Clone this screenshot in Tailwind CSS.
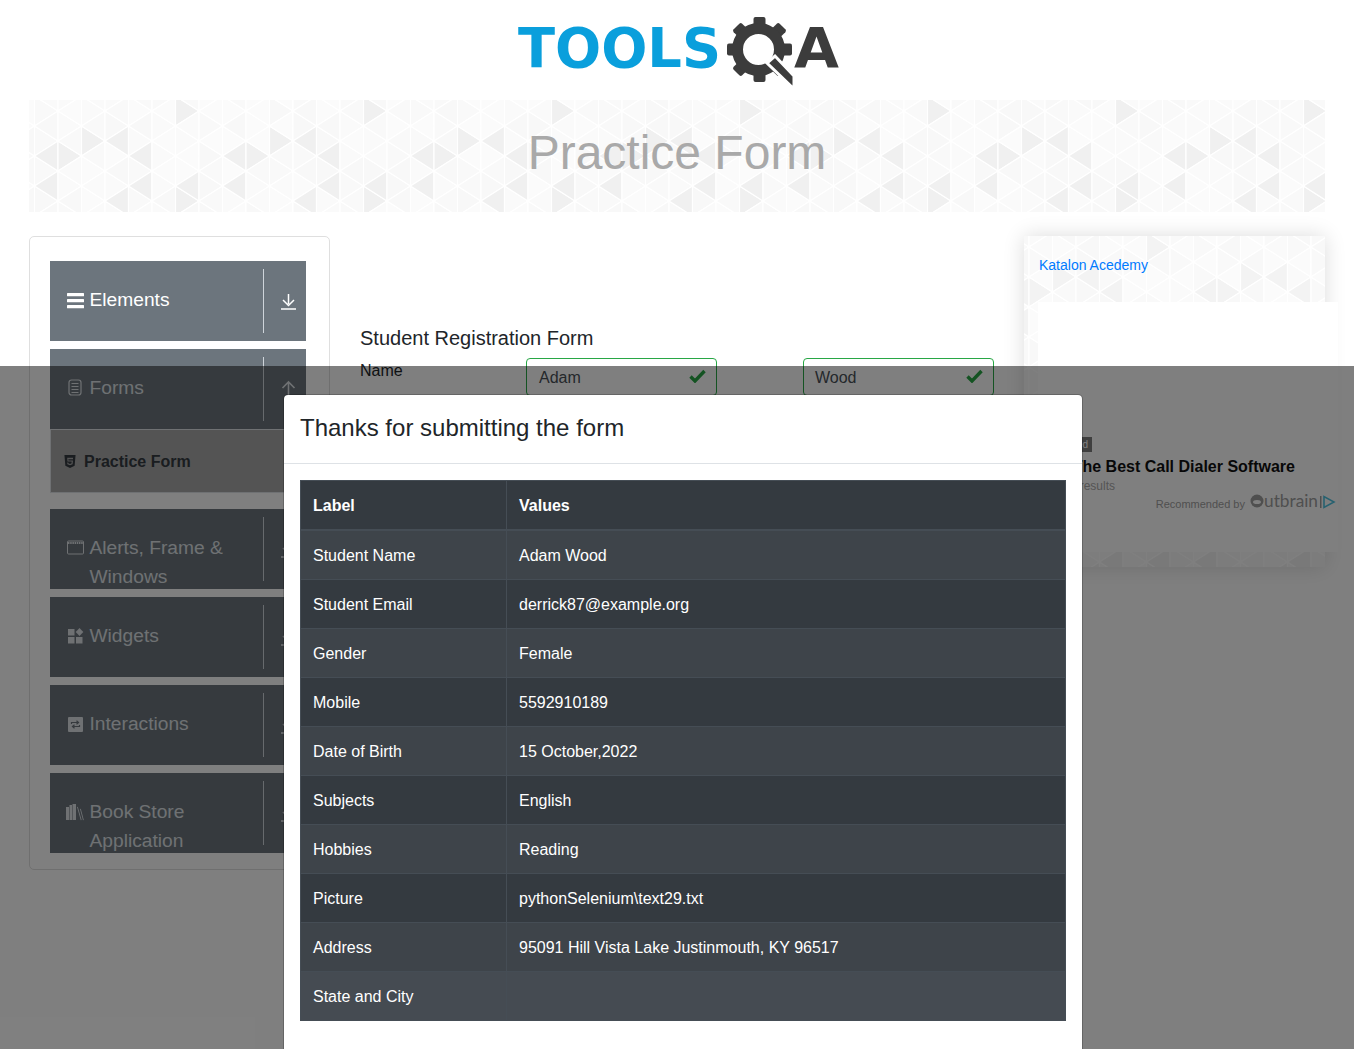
<!DOCTYPE html>
<html lang="en">
<head>
<meta charset="UTF-8">
<title>Practice Form</title>
<script src="https://cdn.jsdelivr.net/npm/@tailwindcss/browser@4"></script>
</head>
<body class="relative h-[1049px] overflow-hidden bg-white font-['Liberation_Sans',Arial,sans-serif] text-[#212529]">

<header class="flex h-[100px] w-[1354px] justify-center">
  <svg width="340" height="100" viewBox="507 0 340 100" aria-label="Tools QA">
    <text x="518" y="67" font-family="DejaVu Sans" font-weight="700" font-size="55" fill="#0a9fdc" textLength="203" lengthAdjust="spacingAndGlyphs">TOOLS</text>
    <g fill="#3c3c3c">
      <rect x="753.500" y="17" width="12" height="12" rx="2"/>
      <rect x="753.500" y="17" width="12" height="12" rx="2" transform="rotate(45 759.500 49.500)"/>
      <rect x="753.500" y="17" width="12" height="12" rx="2" transform="rotate(90 759.500 49.500)"/>
      <rect x="753.500" y="17" width="12" height="12" rx="2" transform="rotate(135 759.500 49.500)"/>
      <rect x="753.500" y="17" width="12" height="12" rx="2" transform="rotate(180 759.500 49.500)"/>
      <rect x="753.500" y="17" width="12" height="12" rx="2" transform="rotate(225 759.500 49.500)"/>
      <rect x="753.500" y="17" width="12" height="12" rx="2" transform="rotate(270 759.500 49.500)"/>
      <rect x="753.500" y="17" width="12" height="12" rx="2" transform="rotate(315 759.500 49.500)"/>
    </g>
    <circle cx="758.500" cy="49.500" r="21" fill="none" stroke="#3c3c3c" stroke-width="11"/>
    <path fill="#3c3c3c" stroke="#fff" stroke-width="3" d="M767 63l8-7 19 20v13z"/>
    <text x="794" y="67" font-family="DejaVu Sans" font-weight="700" font-size="55" fill="#3c3c3c" textLength="45" lengthAdjust="spacingAndGlyphs">A</text>
  </svg>
</header>

<div class="relative mx-[29px] flex h-[112px] w-[1296px] items-start justify-center overflow-hidden">
  <svg data-tri="0" class="absolute inset-0" width="1296" height="112"></svg>
  <h1 class="relative mt-6 text-[48px] leading-[58px] text-[#a9a9a9]">Practice Form</h1>
</div>

<main class="mt-6 flex items-start pl-[29px]">
  <aside class="h-[634px] w-[301px] shrink-0 rounded-[5px] border border-[#dfdfdf] bg-white pt-6 pl-5">
    <div class="flex w-[256px] flex-col">
      <div class="flex h-20 overflow-hidden bg-[#6c757d] text-[19.2px] leading-[29px] text-white">
        <div class="flex w-[213px] pl-[17px] pt-6">
          <svg class="mt-[7px] mr-[5px] h-[17px] w-[17px] shrink-0" viewBox="0 0 17 17" fill="#fff"><rect y="1" width="17" height="3.200" rx=".5"/><rect y="7" width="17" height="3.200" rx=".5"/><rect y="13" width="17" height="3.200" rx=".5"/></svg>
          <span class="pl-[0.5px]">Elements</span>
        </div>
        <div class="mt-2 h-16 w-px bg-[#ced4da]"></div>
        <svg class="mt-8 ml-[17px] h-[17px] w-[15px]" viewBox="0 0 15 17" fill="none" stroke="#fff" stroke-width="1.500"><path d="M7.500 1v10M2 7l5.500 5.500L13 7M0 16h15"/></svg>
      </div>
      <div class="mt-2 flex h-20 overflow-hidden bg-[#6c757d] text-[19.2px] leading-[29px] text-[#dee2e6]">
        <div class="flex w-[213px] pl-[17px] pt-6">
          <svg class="mt-[6px] mr-[6px] h-[17px] w-4 shrink-0" viewBox="0 0 16 17"><rect x="2" y="1" width="12" height="15" rx="2.500" fill="none" stroke="#dee2e6" stroke-width="1.200"/><path d="M4.500 4.500h7M4.500 7.500h7M4.500 10.500h7M4.500 13.500h7" stroke="#dee2e6"/></svg>
          <span class="pl-[0.5px]">Forms</span>
        </div>
        <div class="mt-2 h-16 w-px bg-[#ced4da]"></div>
        <svg class="mt-[30px] ml-[17px] h-[19px] w-[15px]" viewBox="0 0 15 19" fill="none" stroke="#dee2e6" stroke-width="1.600"><path d="M7.500 19V3M1.500 9l6-6 6 6"/></svg>
      </div>
      <div class="flex h-16 items-center border border-[#dee2e6] bg-[#a9a9a9] pl-[13px] pt-px text-base font-bold text-[#343a40]">
        <svg class="mr-2 h-[13px] w-[12px] shrink-0" viewBox="0 0 12 14" fill="#343a40"><path fill-rule="evenodd" d="M0 0h12l-1 11.500L6 14l-5-2.500zM3 3l.3 4h4.500l-.1 2-1.700.6L4.200 9l-.1-1H3l.2 2 2.800 1 2.800-1 .4-4H4.300l-.1-1.500h5L9.300 3z"/></svg>
        <span>Practice Form</span>
      </div>
      <div class="mt-4 flex h-20 overflow-hidden bg-[#6c757d] text-[19.2px] leading-[29px] text-[#dee2e6]">
        <div class="flex w-[213px] pl-[17px] pt-6">
          <svg class="mt-[7px] mr-[5px] h-[15px] w-[17px] shrink-0" viewBox="0 0 17 15" fill="none" stroke="#dee2e6"><rect x=".5" y="1" width="16" height="13" rx="1"/><path d="M1 3h15" stroke-width="2" stroke-dasharray="1.500 .7"/></svg>
          <span class="pl-[0.5px]">Alerts, Frame &amp; Windows</span>
        </div>
        <div class="mt-2 h-16 w-px bg-[#ced4da]"></div>
        <svg class="mt-8 ml-[17px] h-[17px] w-[15px]" viewBox="0 0 15 17" fill="none" stroke="#dee2e6" stroke-width="1.500"><path d="M7.500 1v10M2 7l5.500 5.500L13 7M0 16h15"/></svg>
      </div>
      <div class="mt-2 flex h-20 overflow-hidden bg-[#6c757d] text-[19.2px] leading-[29px] text-[#dee2e6]">
        <div class="flex w-[213px] pl-[17px] pt-6">
          <svg class="mt-[7px] mr-[5px] h-[16px] w-[17px] shrink-0" viewBox="0 0 17 16" fill="#dee2e6"><rect x="1" y="1" width="6.500" height="6.500"/><rect x="1" y="9" width="6.500" height="6.500"/><rect x="9" y="9" width="6.500" height="6.500"/><path d="M12.500 0l3.800 4-3.800 4-3.800-4z"/></svg>
          <span class="pl-[0.5px]">Widgets</span>
        </div>
        <div class="mt-2 h-16 w-px bg-[#ced4da]"></div>
        <svg class="mt-8 ml-[17px] h-[17px] w-[15px]" viewBox="0 0 15 17" fill="none" stroke="#dee2e6" stroke-width="1.500"><path d="M7.500 1v10M2 7l5.500 5.500L13 7M0 16h15"/></svg>
      </div>
      <div class="mt-2 flex h-20 overflow-hidden bg-[#6c757d] text-[19.2px] leading-[29px] text-[#dee2e6]">
        <div class="flex w-[213px] pl-[17px] pt-6">
          <svg class="mt-[7px] mr-[5px] h-[17px] w-[17px] shrink-0" viewBox="0 0 17 17"><rect x="1" y="1" width="15" height="15" rx="1" fill="#dee2e6"/><path d="M4.500 8V6.500h7M9.500 4.800l2 1.700-2 1.700M12.500 9v1.500h-7M7.500 12.200l-2-1.700 2-1.700" fill="none" stroke="#6c757d" stroke-width="1.200"/></svg>
          <span class="pl-[0.5px]">Interactions</span>
        </div>
        <div class="mt-2 h-16 w-px bg-[#ced4da]"></div>
        <svg class="mt-8 ml-[17px] h-[17px] w-[15px]" viewBox="0 0 15 17" fill="none" stroke="#dee2e6" stroke-width="1.500"><path d="M7.500 1v10M2 7l5.500 5.500L13 7M0 16h15"/></svg>
      </div>
      <div class="mt-2 flex h-20 overflow-hidden bg-[#6c757d] text-[19.2px] leading-[29px] text-[#dee2e6]">
        <div class="flex w-[213px] pl-[16px] pt-6">
          <svg class="mt-[7px] mr-[5px] h-[17px] w-[18px] shrink-0" viewBox="0 0 18 17" fill="#dee2e6"><rect x="0" y="3" width="3" height="13"/><rect x="3.500" y="1" width="2.500" height="15"/><rect x="6.500" y="0" width="3.500" height="16"/><path d="M11 3l.8-.3 3.800 13.300-.8.3zM14 5l.8-.3 3 11.300-.8.3z"/></svg>
          <span class="pl-[0.5px]">Book Store Application</span>
        </div>
        <div class="mt-2 h-16 w-px bg-[#ced4da]"></div>
        <svg class="mt-8 ml-[17px] h-[17px] w-[15px]" viewBox="0 0 15 17" fill="none" stroke="#dee2e6" stroke-width="1.500"><path d="M7.500 1v10M2 7l5.500 5.500L13 7M0 16h15"/></svg>
      </div>
    </div>
  </aside>

  <section class="ml-[30px] w-[634px] shrink-0 pt-[87px]">
    <h2 class="text-[20px] leading-[30px]">Student Registration Form</h2>
    <div class="mt-[5px] flex">
      <label class="mt-px w-[166px] text-base leading-6">Name</label>
      <div class="relative flex h-[38px] w-[191px] items-center rounded border border-[#28a745] pl-3 pt-[2px] text-base text-[#495057]">Adam
        <svg class="absolute top-[10px] right-[10px] h-[14px] w-[17px]" viewBox="0 0 17 14" fill="none" stroke="#28a745" stroke-width="3.400"><path d="M1.500 7.500l4.500 4.500L15.500 2"/></svg>
      </div>
      <div class="relative ml-[86px] flex h-[38px] w-[191px] items-center rounded border border-[#28a745] pl-[11px] pt-[2px] text-base text-[#495057]">Wood
        <svg class="absolute top-[10px] right-[10px] h-[14px] w-[17px]" viewBox="0 0 17 14" fill="none" stroke="#28a745" stroke-width="3.400"><path d="M1.500 7.500l4.500 4.500L15.500 2"/></svg>
      </div>
    </div>
  </section>

  <aside class="relative ml-[30px] h-[331px] w-[301px] shrink-0 bg-white shadow-[0_0_20px_rgba(0,0,0,0.14)]">
    <svg data-tri="1" class="absolute inset-0" width="301" height="331"></svg>
    <div class="relative px-[15px] pt-[20px] text-sm leading-[18px]"><a class="text-[#007bff]" href="#">Katalon Acedemy</a></div>
    <div class="absolute top-[66px] left-[14px] h-[250px] w-[300px] bg-white">
      <div class="absolute top-[135px] right-[246px] h-[15px] whitespace-nowrap bg-[#7e7e7e] px-1 text-[10px] leading-[15px] text-white">Sponsored</div>
      <div class="absolute top-[155px] right-[43px] whitespace-nowrap text-base leading-5 font-bold text-[#111]">The Best Call Dialer Software</div>
      <div class="absolute top-[176px] right-[223px] whitespace-nowrap text-xs leading-4 text-[#aaa]">See results</div>
      <div class="absolute top-[190px] right-[2px] flex h-5 items-center whitespace-nowrap text-[11px] text-[#a0a0a0]">
        <span class="mt-1">Recommended by</span>
        <svg class="ml-[5px] overflow-visible" width="70" height="20" viewBox="0 0 70 20"><circle cx="7" cy="9" r="6.500" fill="#9e9e9e"/><ellipse cx="7" cy="10" rx="4" ry="2" fill="#fff"/><text x="14" y="15" font-family="Lato" font-size="17" fill="#9e9e9e" textLength="54" lengthAdjust="spacingAndGlyphs">utbrain</text></svg>
        <svg width="16" height="14" viewBox="0 0 16 14" fill="none" stroke-width="1.600"><path d="M.7 1v12" stroke="#9e9e9e"/><path d="M4 1.500v11L14 7z" stroke="#4fc3e0"/></svg>
      </div>
    </div>
  </aside>
</main>

<div class="absolute top-[366px] bottom-0 left-0 w-[1354px] bg-black/50"></div>

<div class="absolute top-[394px] left-[283px] w-[800px] rounded-[5px] border border-black/20 bg-white bg-clip-padding">
  <div class="h-[69px] border-b border-[#dee2e6] px-4 pt-[15px] text-2xl leading-9">Thanks for submitting the form</div>
  <div class="p-4">
    <table class="w-[766px] border-collapse text-base leading-6 text-white">
      <thead>
        <tr class="bg-[#343a40]"><th class="w-[206px] border border-b-2 border-[#454d55] px-3 pt-[13px] pb-[11px] text-left font-bold">Label</th><th class="border border-b-2 border-[#454d55] px-3 pt-[13px] pb-[11px] text-left font-bold">Values</th></tr>
      </thead>
      <tbody>
        <tr class="bg-[#3e444a]"><td class="border border-[#454d55] px-3 pt-[13px] pb-[11px]">Student Name</td><td class="border border-[#454d55] px-3 pt-[13px] pb-[11px]">Adam Wood</td></tr>
        <tr class="bg-[#343a40]"><td class="border border-[#454d55] px-3 pt-[13px] pb-[11px]">Student Email</td><td class="border border-[#454d55] px-3 pt-[13px] pb-[11px]">derrick87@example.org</td></tr>
        <tr class="bg-[#3e444a]"><td class="border border-[#454d55] px-3 pt-[13px] pb-[11px]">Gender</td><td class="border border-[#454d55] px-3 pt-[13px] pb-[11px]">Female</td></tr>
        <tr class="bg-[#343a40]"><td class="border border-[#454d55] px-3 pt-[13px] pb-[11px]">Mobile</td><td class="border border-[#454d55] px-3 pt-[13px] pb-[11px]">5592910189</td></tr>
        <tr class="bg-[#3e444a]"><td class="border border-[#454d55] px-3 pt-[13px] pb-[11px]">Date of Birth</td><td class="border border-[#454d55] px-3 pt-[13px] pb-[11px]">15 October,2022</td></tr>
        <tr class="bg-[#343a40]"><td class="border border-[#454d55] px-3 pt-[13px] pb-[11px]">Subjects</td><td class="border border-[#454d55] px-3 pt-[13px] pb-[11px]">English</td></tr>
        <tr class="bg-[#3e444a]"><td class="border border-[#454d55] px-3 pt-[13px] pb-[11px]">Hobbies</td><td class="border border-[#454d55] px-3 pt-[13px] pb-[11px]">Reading</td></tr>
        <tr class="bg-[#343a40]"><td class="border border-[#454d55] px-3 pt-[13px] pb-[11px]">Picture</td><td class="border border-[#454d55] px-3 pt-[13px] pb-[11px]">pythonSelenium\text29.txt</td></tr>
        <tr class="bg-[#3e444a]"><td class="border border-[#454d55] px-3 pt-[13px] pb-[11px]">Address</td><td class="border border-[#454d55] px-3 pt-[13px] pb-[11px]">95091 Hill Vista Lake Justinmouth, KY 96517</td></tr>
        <tr class="bg-[#454b52]"><td class="border border-[#454d55] px-3 pt-[13px] pb-[11px]">State and City</td><td class="border border-[#454d55] px-3 pt-[13px] pb-[11px]"></td></tr>
      </tbody>
    </table>
  </div>
  <div class="h-[60px]"></div>
</div>

<script>
// triangle background used on the banner and the ad card
const darkTiles=[['L',0,41],['R',0,41],['R',1,26],['L',3,26],['L',4,41],['L',0,71],['L',4,71],['L',6,71],['R',5,86],['L',3,86],['R',5,-4]];
const colW=23.5,rowH=30;
function tri(dir,e,y,ox){
  const x=ox+e*colW,tip=dir==='L'?x-colW:x+colW;
  return `${x},${y} ${x},${y+rowH} ${tip},${y+rowH/2}`;
}
let seed=7;
function rnd(){seed=(seed*16807)%2147483647;return seed/2147483647;}
document.querySelectorAll('svg[data-tri]').forEach(svg=>{
  const w=+svg.getAttribute('width'),h=+svg.getAttribute('height');
  const isAd=svg.dataset.tri==='1';
  const ox=isAd?5:29;
  const key=y=>((y%120)+120)%120;
  let out='';
  for(let e=-3;e*colW<w+30;e++){
    const off=((e%2)+2)%2?-4:11;
    for(let r=-1;off+r*rowH<h;r++){
      const y=off+r*rowH;
      ['L','R'].forEach(dir=>{
        const m=((e%8)+8)%8;
        const isDark=darkTiles.some(d=>d[0]===dir&&d[1]===m&&key(d[2])===key(y));
        const light=['#fbfbfb','#fafafa','#f9f9f9','#f8f8f8'][Math.floor(rnd()*4)];
        const c=isDark?(isAd?'#f3f3f3':'#f0f0f0'):light;
        out+=`<polygon points="${tri(dir,e,y,ox)}" fill="${c}" stroke="#fff" stroke-width="1.200"/>`;
      });
    }
  }
  svg.innerHTML=out;
});
</script>
</body>
</html>
